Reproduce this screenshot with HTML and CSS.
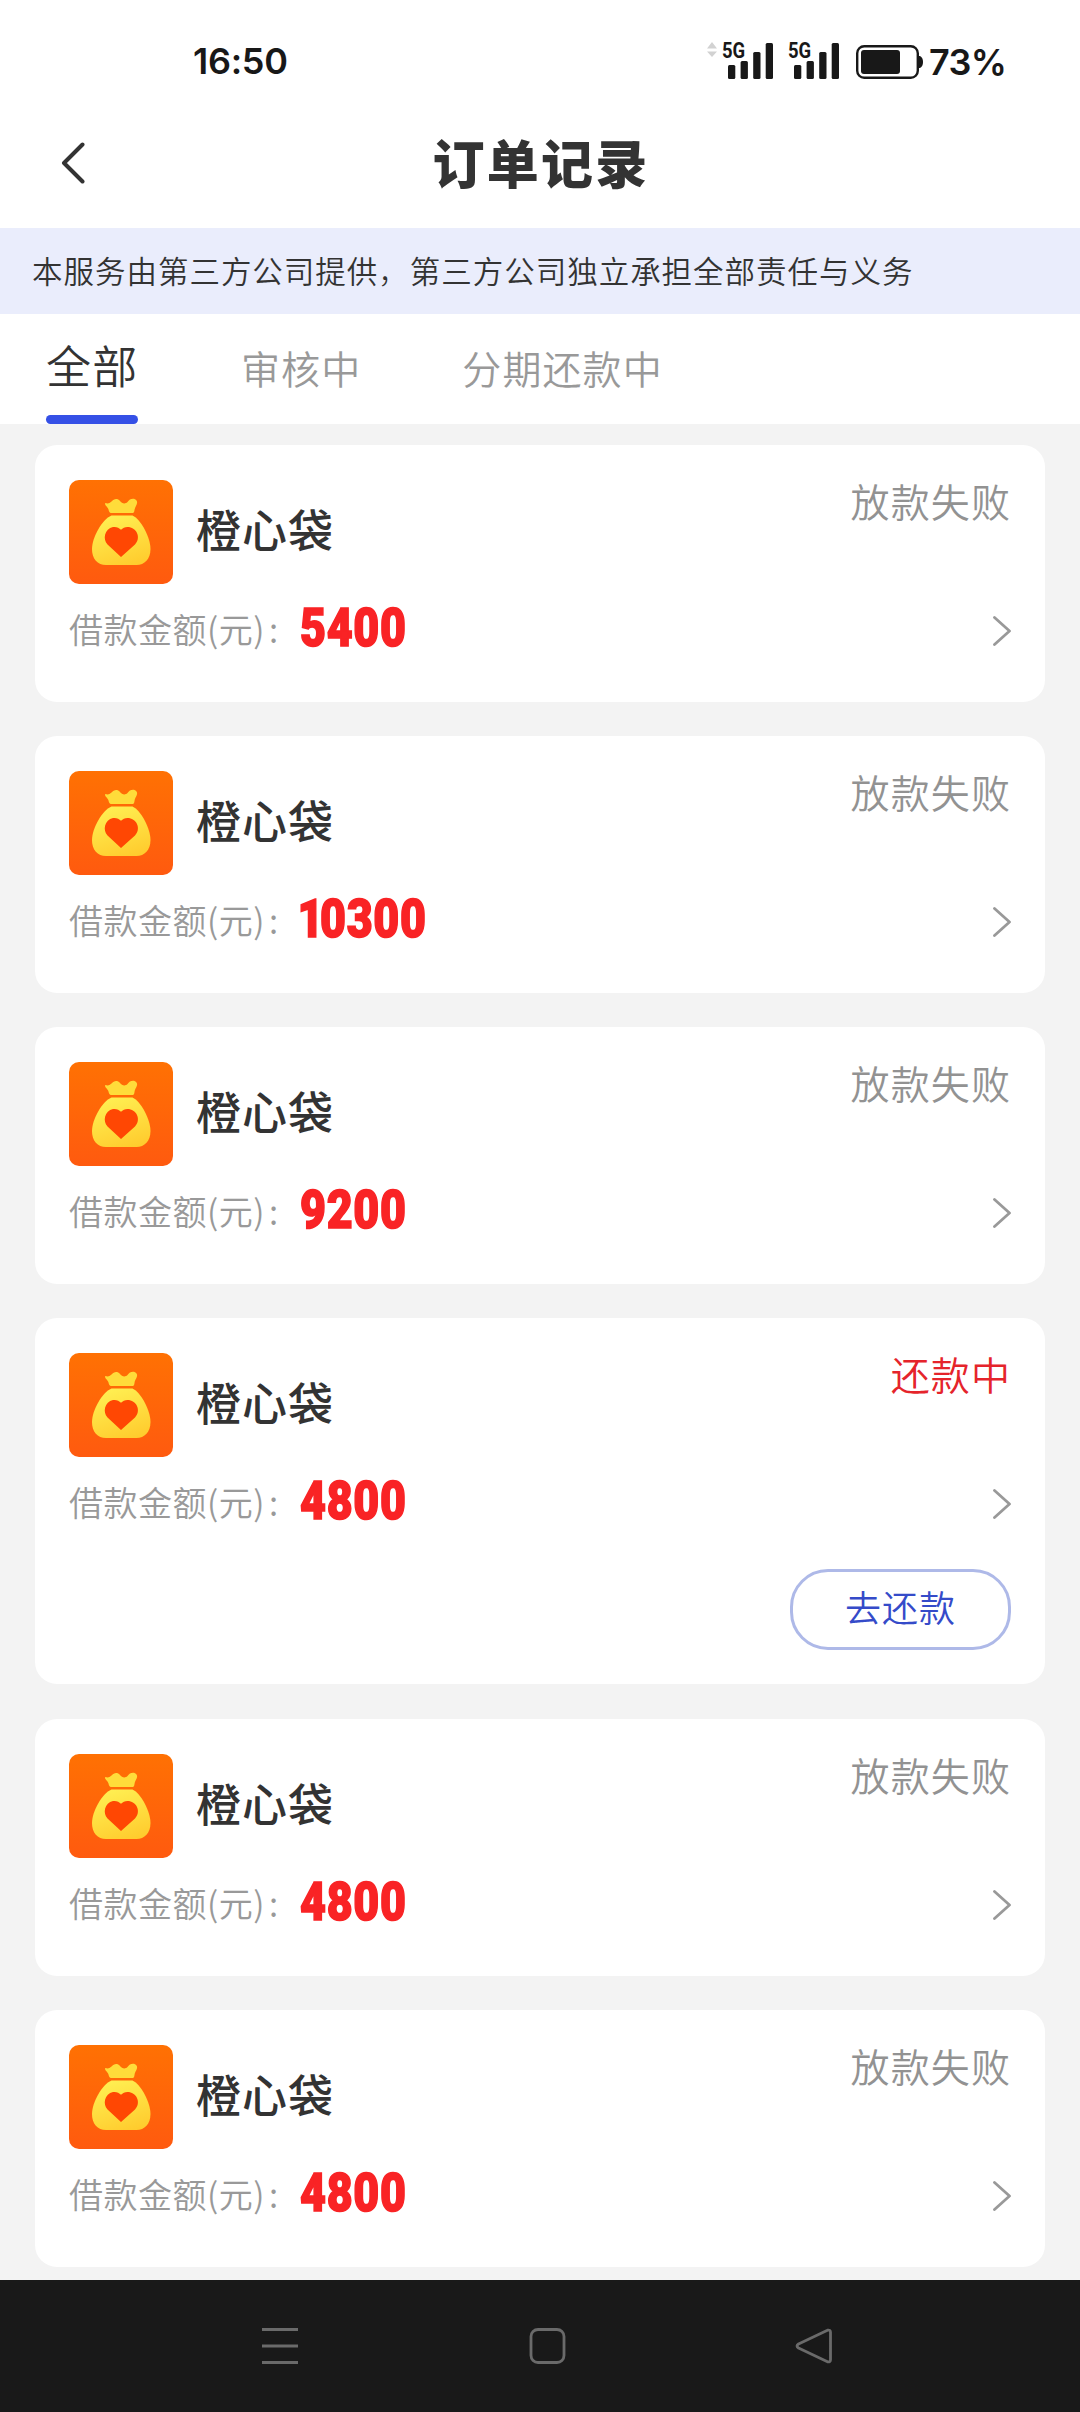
FILE: index.html
```html
<!DOCTYPE html>
<html lang="zh-CN">
<head>
<meta charset="UTF-8">
<title>订单记录</title>
<link rel="stylesheet" href="styles.css">
</head>
<body>
<svg class="defs" width="0" height="0" aria-hidden="true">
  <defs>
    <linearGradient id="tile" x1="0" y1="0" x2="0" y2="1"><stop offset="0" stop-color="#ff7103"/><stop offset="1" stop-color="#ff5a0f"/></linearGradient>
    <linearGradient id="gold" x1=".3" y1="0" x2=".7" y2="1"><stop offset="0" stop-color="#ffef52"/><stop offset="1" stop-color="#ffcc2e"/></linearGradient>
  </defs>
  <symbol id="bag" viewBox="0 0 104 104">
    <rect width="104" height="104" rx="10" fill="url(#tile)"/>
    <path d="M36.500 23c2 1 4 .5 6-1.500 2.500-3 6-3.500 8.500-.5 2 2.500 5 3.500 7.500 1 2-3.500 7-4.500 9-1.500 2 3-1.500 5.500-2 9.500-.3 2-.5 3-2 3H42c-1.500 0-2-1.500-2.500-3.500-.8-3-3.500-3.500-3.500-6z" fill="#ffdc3a"/>
    <path d="M42.500 35.500h21c8.500 4 18 22 18 33.500 0 10-6 16-14 16H37c-8.500 0-14-6-14-16 0-11.500 10-29.500 19.500-33.500z" fill="url(#gold)"/>
    <path d="M52 77L38.500 64.500c-5-5-3-16 5.500-17.500 3.500-.4 6 .6 8 2.800 2-2.200 4.500-3.200 8-2.800 8.500 1.500 12 11.500 6 17.500z" fill="#ff4703"/>
  </symbol>
  <symbol id="chevron" viewBox="0 0 18 30">
    <path d="M1.500 1.500L16.500 15 1.500 28.500" fill="none" stroke="#999" stroke-width="2.800" stroke-linecap="round" stroke-linejoin="round"/>
  </symbol>
  <symbol id="bars" viewBox="0 0 45 36">
    <rect y="22" width="7.300" height="14" rx="1.500"/><rect x="12.600" y="18" width="7.300" height="18" rx="1.500"/><rect x="25.200" y="9" width="7.300" height="27" rx="1.500"/><rect x="37.700" width="7.300" height="36" rx="1.500"/>
  </symbol>
</svg>

<div class="statusbar">
  <time class="clock">16:50</time>
  <div class="indicators">
    <svg class="traffic" viewBox="0 0 10 16"><path d="M5 0l5 6.500H0zM0 9.500h10L5 15z"/></svg>
    <div class="signal"><span class="net">5G</span><svg class="bars"><use href="#bars"/></svg></div>
    <div class="signal"><span class="net">5G</span><svg class="bars"><use href="#bars"/></svg></div>
    <svg class="battery" viewBox="0 0 68 34"><rect x="1.200" y="1.200" width="60.600" height="31.600" rx="7" fill="none" stroke="#181818" stroke-width="2.400"/><rect x="5" y="5" width="39" height="24" rx="3"/><path d="M62 11h2q3 1.500 3 6t-3 6h-2z"/></svg>
    <span class="percent">73%</span>
  </div>
</div>

<header class="titlebar">
  <svg class="back" viewBox="0 0 24 42"><path d="M21.500 2.500L3 21l18.500 18.500" fill="none" stroke="#333" stroke-width="4" stroke-linecap="round" stroke-linejoin="round"/></svg>
  <h1 class="title">订单记录</h1>
</header>

<p class="notice">本服务由第三方公司提供<span class="comma">，</span>第三方公司独立承担全部责任与义务</p>

<nav class="tabs">
  <span class="tab active">全部</span>
  <span class="tab">审核中</span>
  <span class="tab">分期还款中</span>
</nav>

<main class="orders">
  <article class="card">
    <div class="head"><svg class="logo"><use href="#bag"/></svg><h2 class="name">橙心袋</h2><span class="state">放款失败</span></div>
    <div class="line"><span class="label">借款金额(元)<i class="colon">:</i></span><b class="amount">5400</b><svg class="chevron"><use href="#chevron"/></svg></div>
  </article>
  <article class="card">
    <div class="head"><svg class="logo"><use href="#bag"/></svg><h2 class="name">橙心袋</h2><span class="state">放款失败</span></div>
    <div class="line"><span class="label">借款金额(元)<i class="colon">:</i></span><b class="amount"><span class="one">1</span>0300</b><svg class="chevron"><use href="#chevron"/></svg></div>
  </article>
  <article class="card">
    <div class="head"><svg class="logo"><use href="#bag"/></svg><h2 class="name">橙心袋</h2><span class="state">放款失败</span></div>
    <div class="line"><span class="label">借款金额(元)<i class="colon">:</i></span><b class="amount">9200</b><svg class="chevron"><use href="#chevron"/></svg></div>
  </article>
  <article class="card repay">
    <div class="head"><svg class="logo"><use href="#bag"/></svg><h2 class="name">橙心袋</h2><span class="state due">还款中</span></div>
    <div class="line"><span class="label">借款金额(元)<i class="colon">:</i></span><b class="amount">4800</b><svg class="chevron"><use href="#chevron"/></svg></div>
    <button class="pay">去还款</button>
  </article>
  <article class="card">
    <div class="head"><svg class="logo"><use href="#bag"/></svg><h2 class="name">橙心袋</h2><span class="state">放款失败</span></div>
    <div class="line"><span class="label">借款金额(元)<i class="colon">:</i></span><b class="amount">4800</b><svg class="chevron"><use href="#chevron"/></svg></div>
  </article>
  <article class="card">
    <div class="head"><svg class="logo"><use href="#bag"/></svg><h2 class="name">橙心袋</h2><span class="state">放款失败</span></div>
    <div class="line"><span class="label">借款金额(元)<i class="colon">:</i></span><b class="amount">4800</b><svg class="chevron"><use href="#chevron"/></svg></div>
  </article>
</main>

<footer class="sysnav">
  <svg viewBox="0 0 40 40"><path d="M2 3.500h36M2 20h36M2 36.500h36"/></svg>
  <svg viewBox="0 0 40 40"><rect x="4" y="3.500" width="33" height="33" rx="7"/></svg>
  <svg viewBox="0 0 40 40"><path d="M33.500 4.200L4.500 18q-3 2 0 4l29 13.800q3 .5 3-2V6.200q0-2.500-3-2z"/></svg>
</footer>
</body>
</html>
```

FILE: styles.css
```css
* { box-sizing: border-box; }
body {
  margin: 0;
  width: 1080px;
  height: 2412px;
  overflow: hidden;
  display: flex;
  flex-direction: column;
  background: #f3f3f3;
  color: #333;
  font-family: "Noto Sans CJK SC", sans-serif;
}
h1, h2, p { margin: 0; }
svg { display: block; flex: none; }
.defs { position: absolute; }

.statusbar {
  height: 100px;
  padding: 0 74px 0 193px;
  display: flex;
  justify-content: space-between;
  background: #fff;
  color: #181818;
  fill: #181818;
  font-family: Inter, sans-serif;
  font-weight: 600;
}
.clock { font-size: 36px; line-height: 40px; padding-top: 41px; letter-spacing: -.3px; }
.indicators { display: flex; align-items: flex-start; padding-top: 42px; }
.traffic { width: 10px; height: 16px; fill: #d2d2d2; margin-right: 5px; }
.signal { width: 51px; margin-right: 15px; display: grid; }
.net {
  grid-area: 1 / 1;
  font: 700 22px/17px Roboto, sans-serif;
  transform: scaleX(.84);
  transform-origin: 0 0;
}
.bars { grid-area: 1 / 1; width: 45px; height: 36px; margin: 1px 0 0 6px; }
.battery { width: 68px; height: 34px; margin: 3px 5px 0 2px; }
.percent { width: 77px; font-size: 36px; line-height: 40px; letter-spacing: -.7px; }

.titlebar {
  height: 128px;
  padding: 0 61px;
  display: grid;
  grid-template-columns: 24px 1fr 24px;
  background: #fff;
}
.back { width: 24px; height: 42px; margin-top: 42px; }
.title {
  font-size: 52px;
  line-height: 76px;
  margin: 24px 0 0 2px;
  letter-spacing: 2.300px;
  text-align: center;
  font-weight: 800;
}
.notice {
  height: 86px;
  padding-left: 32px;
  background: #eaedfc;
  font-size: 30.500px;
  line-height: 84px;
  letter-spacing: .98px;
  font-weight: 350;
  white-space: nowrap;
}
.comma { font-weight: 300; }
.tabs {
  height: 110px;
  padding-left: 46px;
  display: flex;
  background: #fff;
}
.tab {
  font-size: 39px;
  line-height: 107px;
  letter-spacing: 1.100px;
  color: #999;
  font-weight: 350;
  margin-right: 101px;
  white-space: nowrap;
}
.tab.active {
  width: 92px;
  height: 110px;
  margin-right: 103px;
  display: flex;
  flex-direction: column;
  color: #333;
  font-size: 45px;
  line-height: 101px;
  letter-spacing: 1.300px;
}
.tab.active::after {
  content: "";
  height: 9px;
  border-radius: 4.500px;
  background: #3550e6;
}

.orders {
  height: 1856px;
  padding: 21px 35px 0;
  display: flex;
  flex-direction: column;
  gap: 34px;
}
.card {
  flex: none;
  height: 257px;
  padding: 35px 34px 0;
  background: #fff;
  border-radius: 22px;
}
.card.repay { height: 366px; margin-bottom: 1px; }
.head { display: flex; height: 104px; }
.logo { width: 104px; height: 104px; }
.name { margin-left: 23px; font-size: 45px; line-height: 98px; letter-spacing: 1px; font-weight: 500; }
.state {
  margin-left: auto;
  height: 46px;
  margin-top: -3px;
  font-size: 39px;
  line-height: 46px;
  letter-spacing: 1.100px;
  color: #929292;
  font-weight: 350;
}
.due { color: #e5242b; }
.line { display: flex; height: 92px; }
.label {
  width: 231px;
  flex: none;
  font-size: 34px;
  line-height: 90px;
  letter-spacing: .5px;
  color: #999;
  font-weight: 350;
}
.colon { font-style: normal; margin-left: 4px; }
.amount {
  font: 900 54px/88px Roboto, sans-serif;
  color: #f92325;
  letter-spacing: .8px;
  -webkit-text-stroke: 1.600px #f92325;
  transform: scaleX(.83);
  transform-origin: 0 0;
}
.one { margin: 0 -5px 0 -3px; }
.chevron { width: 18px; height: 30px; margin: 32px 0 0 auto; }
.pay {
  display: block;
  width: 221px;
  height: 81px;
  margin: 20px 0 0 auto;
  padding: 0 0 6px;
  border: 3px solid #aeb9e8;
  border-radius: 38px;
  background: #fff;
  color: #354bc9;
  font: 350 36px/69px "Noto Sans CJK SC", sans-serif;
  letter-spacing: 1px;
}

.sysnav {
  height: 132px;
  padding: 46px 246px 0 260px;
  display: flex;
  justify-content: space-between;
  background: #191919;
}
.sysnav svg { width: 40px; height: 40px; fill: none; stroke: #6a6a6a; stroke-width: 2.800; stroke-linejoin: round; }
```
